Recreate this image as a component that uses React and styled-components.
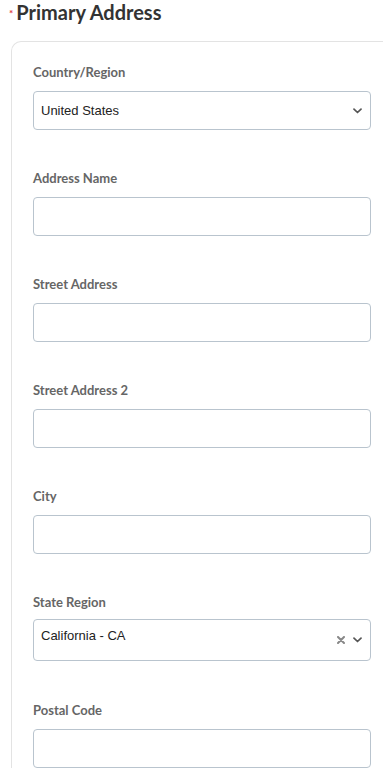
import React from 'react'
import styled, { createGlobalStyle } from 'styled-components'

const GlobalStyle = createGlobalStyle`
  body {
    margin: 0;
    background: #fff;
    font-family: Lato, "Open Sans", sans-serif;
  }
`

const Page = styled.div`
  width: 383px;
  overflow: hidden;
`

const Heading = styled.h2`
  margin: 0;
  height: 41px;
  padding: 0 0 0 9px;
  box-sizing: border-box;
  display: flex;
  align-items: flex-start;
  font-size: 20px;
  line-height: 24px;
  font-weight: 700;
  color: #333;
`

const Required = styled.span`
  color: #e0393e;
  font-size: 10px;
  line-height: 1;
  margin: 8px 3px 0 0;
`

const Panel = styled.section`
  margin-left: 11px;
  margin-right: -2px;
  border-top: 1px solid #e3e3e3;
  border-left: 1px solid #e3e3e3;
  border-top-left-radius: 10px;
  padding: 21px 14px 0 21px;
`

const Field = styled.div`
  margin-bottom: ${props => (props.tall ? '40px' : '39px')};
`

const Label = styled.label`
  display: block;
  font-size: 13px;
  line-height: 18px;
  font-weight: 700;
  color: #666;
  margin-bottom: ${props => (props.tall ? '8px' : '10px')};
`

const Box = styled.div`
  height: ${props => (props.tall ? '42px' : '39px')};
  box-sizing: border-box;
  border: 1px solid #b9c4ce;
  border-radius: 4px;
  background: #fff;
  display: flex;
  align-items: center;
  padding: 0 8px 0 7px;
  font-family: "Liberation Sans", Arial, sans-serif;
  font-size: 13px;
  color: #222;
`

const Value = styled.span`
  flex: 1;
  align-self: ${props => (props.tall ? 'flex-start' : 'center')};
  margin-top: ${props => (props.tall ? '8px' : '0')};
`

const Icons = styled.div`
  display: flex;
  align-items: center;
  gap: 8px;
`

const Chevron = () => (
  <svg width="9" height="6" viewBox="0 0 9 6">
    <path d="M1 1.2 L4.5 4.5 L8 1.2" fill="none" stroke="#555" strokeWidth="1.7" strokeLinecap="round" strokeLinejoin="round" />
  </svg>
)

const Clear = () => (
  <svg width="8" height="8" viewBox="0 0 8 8">
    <path d="M1 1 L7 7 M7 1 L1 7" stroke="#888" strokeWidth="2" strokeLinecap="round" />
  </svg>
)

const fields = [
  { label: 'Country/Region', value: 'United States', select: true },
  { label: 'Address Name' },
  { label: 'Street Address' },
  { label: 'Street Address 2' },
  { label: 'City' },
  { label: 'State Region', value: 'California - CA', select: true, clearable: true, tall: true },
  { label: 'Postal Code' },
]

const App = () => (
  <Page>
    <GlobalStyle />
    <Heading>
      <Required>*</Required>
      Primary Address
    </Heading>
    <Panel>
      {fields.map(f => (
        <Field key={f.label} tall={f.tall}>
          <Label tall={f.tall}>{f.label}</Label>
          <Box tall={f.tall}>
            <Value tall={f.tall}>{f.value}</Value>
            {f.select && (
              <Icons>
                {f.clearable && <Clear />}
                <Chevron />
              </Icons>
            )}
          </Box>
        </Field>
      ))}
    </Panel>
  </Page>
)

export default App
